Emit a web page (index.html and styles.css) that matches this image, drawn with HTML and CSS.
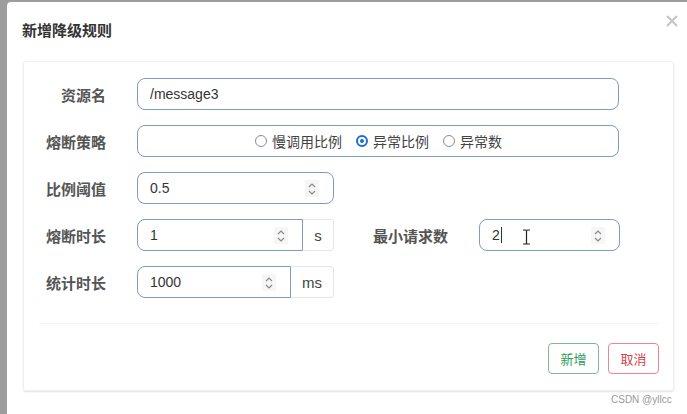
FILE: index.html
```html
<!DOCTYPE html>
<html lang="zh">
<head>
<meta charset="utf-8">
<title>新增降级规则</title>
<link rel="stylesheet" href="styles.css">
</head>
<body>
<div class="dialog">
  <div class="title">新增降级规则</div>
  <svg class="close" width="12" height="12" viewBox="0 0 12 12"><path d="M1 1L11 11M11 1L1 11" stroke="#c4c4c4" stroke-width="2"/></svg>
  <div class="panel">
    <div class="form">
      <div class="row">
        <div class="label">资源名</div>
        <div class="field wide"><span class="val">/message3</span></div>
      </div>
      <div class="row">
        <div class="label">熔断策略</div>
        <div class="field wide radios">
          <span class="radio"><i class="dot"></i>慢调用比例</span>
          <span class="radio"><i class="dot on"></i>异常比例</span>
          <span class="radio"><i class="dot"></i>异常数</span>
        </div>
      </div>
      <div class="row">
        <div class="label">比例阈值</div>
        <div class="field mid"><span class="val">0.5</span>
          <span class="spin"><svg width="10" height="16" viewBox="0 0 10 16"><path d="M2 6L5 3L8 6M2 10L5 13L8 10" fill="none" stroke="#8a8a8a" stroke-width="1.2"/></svg></span>
        </div>
      </div>
      <div class="row">
        <div class="label">熔断时长</div>
        <div class="group">
          <div class="field left w1"><span class="val">1</span>
            <span class="spin"><svg width="10" height="16" viewBox="0 0 10 16"><path d="M2 6L5 3L8 6M2 10L5 13L8 10" fill="none" stroke="#8a8a8a" stroke-width="1.2"/></svg></span>
          </div>
          <div class="addon a1">s</div>
        </div>
        <div class="label2">最小请求数</div>
        <div class="field small"><span class="val">2</span><span class="caret"></span>
          <svg class="ibeam" width="9" height="16" viewBox="0 0 9 16"><path d="M1 1H3.5Q4.5 1 4.5 2V14Q4.5 15 3.5 15H1M8 1H5.5Q4.5 1 4.5 2M4.5 14Q4.5 15 5.5 15H8" fill="none" stroke="#222" stroke-width="1.2"/></svg>
          <span class="spin"><svg width="10" height="16" viewBox="0 0 10 16"><path d="M2 6L5 3L8 6M2 10L5 13L8 10" fill="none" stroke="#8a8a8a" stroke-width="1.2"/></svg></span>
        </div>
      </div>
      <div class="row">
        <div class="label">统计时长</div>
        <div class="group">
          <div class="field left w2"><span class="val">1000</span>
            <span class="spin"><svg width="10" height="16" viewBox="0 0 10 16"><path d="M2 6L5 3L8 6M2 10L5 13L8 10" fill="none" stroke="#8a8a8a" stroke-width="1.2"/></svg></span>
          </div>
          <div class="addon a2">ms</div>
        </div>
      </div>
    </div>
    <div class="footer">
      <button class="btn ok">新增</button>
      <button class="btn cancel">取消</button>
    </div>
  </div>
  <div class="mark">CSDN @yllcc</div>
</div>
</body>
</html>
```

FILE: styles.css
```css
html, body {
  margin: 0;
  height: 100%;
  overflow: hidden;
}
body {
  background: #9d9d9d;
  font-family: "Liberation Sans", "Noto Sans CJK SC", sans-serif;
  color: #333;
}
.dialog {
  position: relative;
  margin: 2px 0 0 7px;
  height: 420px;
  background: #fff;
  border-top-left-radius: 4px;
  padding: 19px 0 0 16px;
  box-sizing: border-box;
}
.title {
  font-size: 15px;
  font-weight: bold;
  color: #333;
  line-height: 20px;
  margin-left: -1px;
}
.close {
  position: absolute;
  top: 13px;
  right: 9px;
}
.panel {
  margin-top: 20px;
  width: 651px;
  height: 330px;
  box-sizing: border-box;
  border: 1px solid #f0f0f0;
  border-radius: 3px;
  box-shadow: 0 1px 2px rgba(0,0,0,0.12);
  display: flex;
  flex-direction: column;
}
.form {
  padding-top: 16px;
  display: flex;
  flex-direction: column;
  gap: 15px;
}
.row {
  display: flex;
  align-items: center;
  height: 32px;
}
.label {
  width: 82px;
  margin-right: 31px;
  text-align: right;
  font-size: 15px;
  font-weight: bold;
  color: #555;
}
.label2 {
  width: 77px;
  margin-left: 39px;
  margin-right: 29px;
  font-size: 15px;
  font-weight: bold;
  color: #555;
}
.field {
  position: relative;
  height: 32px;
  box-sizing: border-box;
  border: 1px solid #7f9cc0;
  border-radius: 8px;
  display: flex;
  align-items: center;
  padding-left: 12px;
  font-size: 14px;
  color: #333;
}
.wide { width: 482px; }
.mid { width: 197px; }
.small { width: 141px; }
.left {
  border-top-right-radius: 0;
  border-bottom-right-radius: 0;
}
.w1 { width: 166px; }
.w2 { width: 154px; }
.group { display: flex; }
.addon {
  height: 32px;
  box-sizing: border-box;
  border: 1px solid #e6e6e6;
  border-left: none;
  border-radius: 0 4px 4px 0;
  display: flex;
  align-items: center;
  justify-content: center;
  font-size: 15px;
  color: #444;
}
.a1 { width: 31px; }
.a2 { width: 43px; }
.spin {
  position: absolute;
  right: 14px;
  top: 7px;
  width: 14px;
  height: 17px;
  background: #f6f6f6;
  display: flex;
  align-items: center;
  justify-content: center;
}
.caret {
  display: inline-block;
  width: 1px;
  height: 16px;
  background: #333;
  margin-left: 1px;
}
.ibeam {
  position: absolute;
  left: 42px;
  top: 9px;
}
.radios {
  justify-content: flex-start;
  padding-left: 117px;
}
.radio {
  display: flex;
  align-items: center;
  margin-right: 14px;
  font-size: 14px;
  color: #444;
}
.dot {
  width: 12px;
  height: 12px;
  box-sizing: border-box;
  border: 1px solid #8c8c8c;
  border-radius: 50%;
  margin-right: 5px;
  position: relative;
}
.dot.on {
  border: 2px solid #1a6fd3;
}
.dot.on::after {
  content: "";
  position: absolute;
  left: 2px;
  top: 2px;
  width: 4px;
  height: 4px;
  border-radius: 50%;
  background: #1a6fd3;
}
.footer {
  margin: 25px 14px 0 15px;
  border-top: 1px solid #f5f5f5;
  padding-top: 19px;
  display: flex;
  justify-content: flex-end;
  gap: 9px;
}
.btn {
  width: 51px;
  height: 31px;
  background: #fff;
  border-radius: 4px;
  font-family: "Liberation Sans", "Noto Sans CJK SC", sans-serif;
  font-size: 13px;
  padding: 0;
  cursor: pointer;
}
.ok {
  border: 1px solid #7cb99a;
  color: #2f9a5a;
}
.cancel {
  border: 1px solid #e28a8f;
  color: #d6434b;
}
.mark {
  position: absolute;
  left: 604px;
  top: 392px;
  font-size: 10px;
  color: #999;
}
```
